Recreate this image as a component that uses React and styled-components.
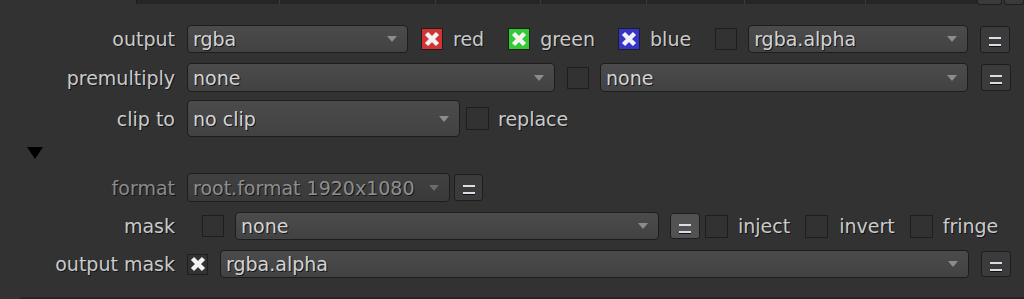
import React from 'react';
import styled, { createGlobalStyle } from 'styled-components';

const GlobalStyle = createGlobalStyle`
  html, body {
    margin: 0;
    padding: 0;
    background: #323232;
  }
  body {
    font-family: "DejaVu Sans", Verdana, sans-serif;
    font-size: 19px;
    color: #c8c8c8;
  }
`;

const Panel = styled.div`
  width: 1024px;
  height: 299px;
  overflow: hidden;
  background: #323232;
  display: flex;
  flex-direction: column;
`;

const TopBar = styled.div`
  display: flex;
  height: 5px;
  padding-left: 136px;
`;

const Tab = styled.div`
  width: ${(p) => p.$w}px;
  height: 4px;
  background: #262626;
  border-left: 1px solid #3c3c3c;
  box-sizing: border-box;
  &:first-child {
    border-left: 1px solid #1c1c1c;
  }
`;

const TopButton = styled.div`
  width: ${(p) => p.$w}px;
  height: 5px;
  margin-left: ${(p) => p.$ml || 0}px;
  background: #3a3a3a;
  border: 1px solid #1f1f1f;
  border-top: none;
  border-radius: 0 0 3px 3px;
  box-sizing: border-box;
`;

const Row = styled.div`
  display: grid;
  grid-template-columns: 175px 1fr;
  column-gap: 12px;
  align-items: center;
  height: ${(p) => p.$h}px;
  margin-top: ${(p) => p.$mt}px;
`;

const Label = styled.div`
  text-align: right;
  white-space: nowrap;
  color: ${(p) => (p.$dim ? '#8a8a8a' : '#cacaca')};
  text-shadow: 1px 1px 0 #141414;
`;

const Controls = styled.div`
  display: flex;
  align-items: center;
  height: 100%;
`;

const Dropdown = styled.div`
  box-sizing: border-box;
  width: ${(p) => p.$w}px;
  height: ${(p) => p.$h || 28}px;
  margin-left: ${(p) => p.$ml || 0}px;
  display: flex;
  align-items: center;
  justify-content: space-between;
  padding: 0 10px 0 5px;
  border: 1px solid #1d1d1d;
  border-radius: 4px;
  background: ${(p) =>
    p.$disabled
      ? 'linear-gradient(#404040, #3a3a3a)'
      : 'linear-gradient(#4b4b4b, #424242)'};
  color: ${(p) => (p.$disabled ? '#8e8e8e' : '#d4d4d4')};
  text-shadow: 1px 1px 0 #161616;
  white-space: nowrap;
  &::after {
    content: '';
    flex: none;
    width: 0;
    height: 0;
    border-left: 5px solid transparent;
    border-right: 5px solid transparent;
    border-top: 6px solid ${(p) => (p.$disabled ? '#6a6a70' : '#8c8c8c')};
    margin-left: 8px;
  }
`;

const Box = styled.div`
  box-sizing: border-box;
  flex: none;
  width: ${(p) => p.$s || 22}px;
  height: ${(p) => p.$s || 22}px;
  margin-left: ${(p) => p.$ml || 0}px;
  border: 1px solid #1e1e1e;
  background: ${(p) => p.$fill || '#323232'};
  display: flex;
  align-items: center;
  justify-content: center;
`;

const CheckText = styled.span`
  margin-left: ${(p) => p.$ml || 10}px;
  color: #cacaca;
  text-shadow: 1px 1px 0 #141414;
  white-space: nowrap;
`;

const EqButton = styled.div`
  box-sizing: border-box;
  flex: none;
  width: ${(p) => p.$w || 30}px;
  height: ${(p) => p.$h || 27}px;
  margin-left: ${(p) => p.$ml || 0}px;
  border: 1px solid #1d1d1d;
  border-radius: 3px;
  background: ${(p) => (p.$lit ? '#525252' : '#3b3b3b')};
  display: flex;
  align-items: center;
  justify-content: center;
  padding-top: 4px;
`;

const EqLines = styled.div`
  width: 12px;
  height: 5px;
  border-top: 2px solid #dcdce6;
  border-bottom: 2px solid #dcdce6;
  box-shadow: 0 1px 0 #111;
`;

const Triangle = styled.div`
  width: 0;
  height: 0;
  margin-left: 27px;
  border-left: 8px solid transparent;
  border-right: 8px solid transparent;
  border-top: 12px solid #000;
`;

const TriRow = styled.div`
  height: 13px;
  margin-top: 10px;
  display: flex;
  align-items: flex-start;
`;

const Footer = styled.div`
  margin-top: auto;
  margin-left: 20px;
  height: 2px;
  background: #262626;
`;

function Cross() {
  return (
    <svg width="16" height="16" viewBox="0 0 16 16">
      <path d="M2.5 2.5 L13.5 13.5 M13.5 2.5 L2.5 13.5" stroke="#f2f2f2" strokeWidth="4.5" strokeLinecap="butt" />
    </svg>
  );
}

function Check({ fill, checked, ml, s }) {
  return (
    <Box $fill={fill} $ml={ml} $s={s}>
      {checked && <Cross />}
    </Box>
  );
}

function Eq(props) {
  return (
    <EqButton {...props}>
      <EqLines />
    </EqButton>
  );
}

export default function App() {
  return (
    <Panel>
      <GlobalStyle />
      <TopBar>
        <Tab $w={143} />
        <Tab $w={156} />
        <Tab $w={105} />
        <Tab $w={107} />
        <Tab $w={98} />
        <Tab $w={121} />
        <Tab $w={112} />
        <TopButton $w={25} />
        <TopButton $w={20} $ml={2} />
      </TopBar>

      <Row $h={28} $mt={20}>
        <Label>output</Label>
        <Controls>
          <Dropdown $w={221}>rgba</Dropdown>
          <Check fill="#cf3535" checked ml={13} />
          <CheckText>red</CheckText>
          <Check fill="#35c935" checked ml={24} />
          <CheckText>green</CheckText>
          <Check fill="#3535c9" checked ml={23} />
          <CheckText>blue</CheckText>
          <Check ml={24} />
          <Dropdown $w={220} $ml={11}>rgba.alpha</Dropdown>
          <Eq $ml={12} />
        </Controls>
      </Row>

      <Row $h={29} $mt={10}>
        <Label>premultiply</Label>
        <Controls>
          <Dropdown $w={368} $h={29}>none</Dropdown>
          <Check ml={12} />
          <Dropdown $w={368} $h={29} $ml={11}>none</Dropdown>
          <Eq $ml={13} />
        </Controls>
      </Row>

      <Row $h={37} $mt={8}>
        <Label>clip to</Label>
        <Controls>
          <Dropdown $w={273} $h={37}>no clip</Dropdown>
          <Check ml={6} s={23} />
          <CheckText $ml={9}>replace</CheckText>
        </Controls>
      </Row>

      <TriRow>
        <Triangle />
      </TriRow>

      <Row $h={29} $mt={13}>
        <Label $dim>format</Label>
        <Controls>
          <Dropdown $w={263} $h={29} $disabled>root.format 1920x1080</Dropdown>
          <Eq $ml={4} $w={29} />
        </Controls>
      </Row>

      <Row $h={28} $mt={10}>
        <Label>mask</Label>
        <Controls>
          <Check ml={15} />
          <Dropdown $w={424} $ml={11}>none</Dropdown>
          <Eq $ml={11} $h={26} $lit />
          <Check ml={5} s={23} />
          <CheckText>inject</CheckText>
          <Check ml={15} s={23} />
          <CheckText $ml={11}>invert</CheckText>
          <Check ml={15} s={23} />
          <CheckText>fringe</CheckText>
        </Controls>
      </Row>

      <Row $h={28} $mt={10}>
        <Label>output mask</Label>
        <Controls>
          <Check checked s={21} />
          <Dropdown $w={749} $ml={12}>rgba.alpha</Dropdown>
          <Eq $ml={12} $h={26} />
        </Controls>
      </Row>

      <Footer />
    </Panel>
  );
}
